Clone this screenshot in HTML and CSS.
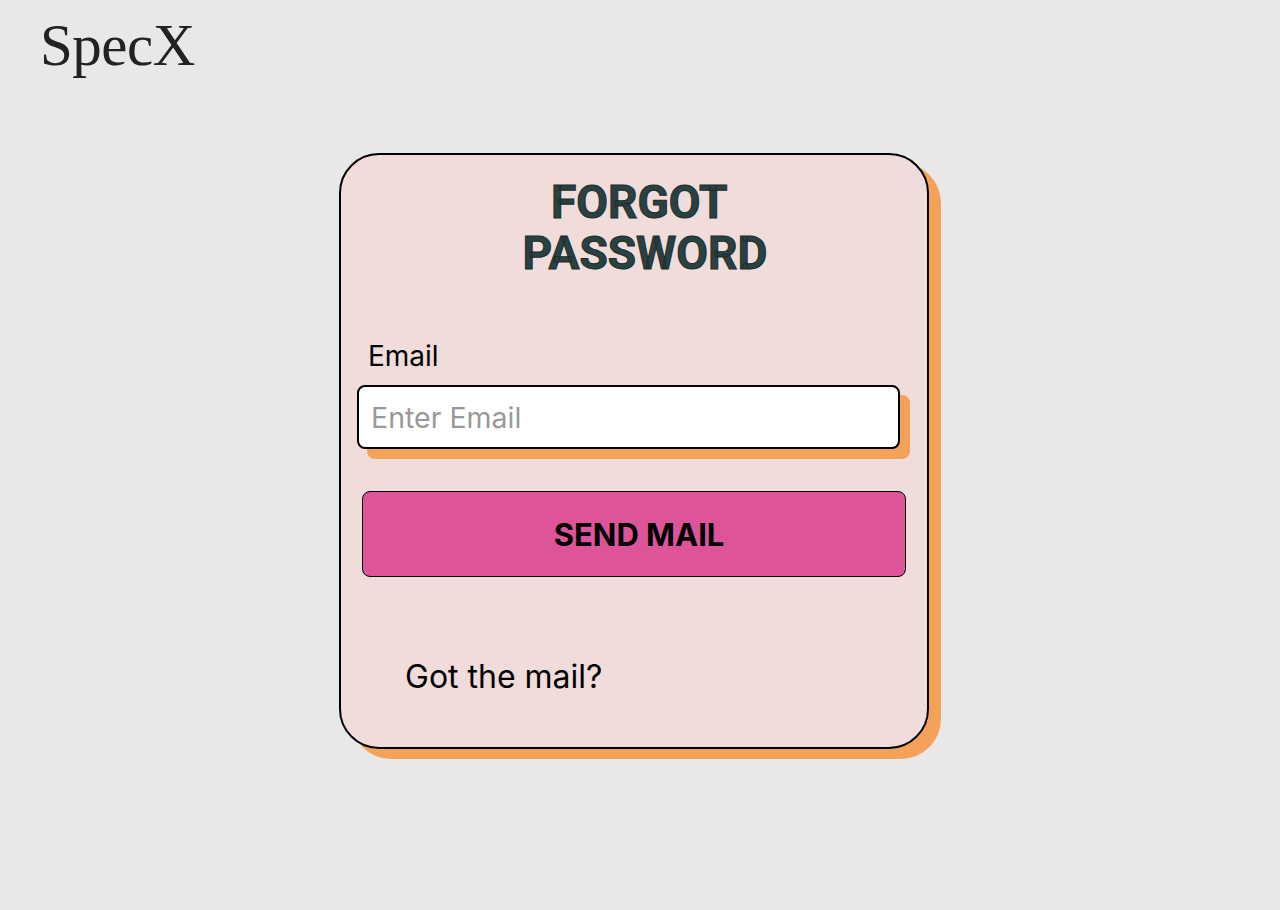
FILE: index.html
```html
<!DOCTYPE html>
<html lang="en">
<head>
<meta charset="utf-8">
<title>SpecX - Forgot Password</title>
<link rel="stylesheet" href="styles.css">
</head>
<body>
<header class="top">
  <div class="logo">SpecX</div>
</header>
<main class="stage">
  <section class="card">
    <h1 class="title">FORGOT&nbsp;<br>PASSWORD</h1>
    <label class="label" for="email">Email</label>
    <div class="field-wrap">
      <input class="field" id="email" type="email" placeholder="Enter Email">
    </div>
    <button class="send" type="button">SEND MAIL</button>
    <p class="got">Got the mail?</p>
  </section>
</main>
</body>
</html>
```
FILE: styles.css
```css
* { box-sizing: border-box; }
html {
  background: #e8e8e8;
}
body {
  margin: 0;
  padding: 0 0 60px 0;
  min-height: 100vh;
  font-family: Inter, "Noto Sans", sans-serif;
}
.top {
  height: 153px;
  padding: 10px 0 0 40px;
}
.logo {
  font-family: "Liberation Serif", "DejaVu Serif", serif;
  font-size: 59px;
  line-height: 70px;
  color: #222;
  letter-spacing: -0.5px;
}
.stage {
  display: flex;
  padding-left: 339px;
}
.card {
  width: 590px;
  height: 596px;
  background: #efdcdb;
  border: 2px solid #000;
  border-radius: 40px;
  box-shadow: 12px 10px 0 #f4a259;
  padding: 22px 16px 0 16px;
  display: flex;
  flex-direction: column;
}
.title {
  margin: 0;
  padding-left: 22px;
  text-align: center;
  font-family: Roboto, Inter, sans-serif;
  font-size: 46px;
  line-height: 51px;
  font-weight: 700;
  color: #2a4141;
  -webkit-text-stroke: 1px #1c2b2b;
}
.label {
  margin-top: 60px;
  padding-left: 11px;
  font-size: 28px;
  line-height: 34px;
  color: #000;
}
.field-wrap {
  margin-top: 12px;
}
.field {
  display: block;
  width: 543px;
  height: 64px;
  border: 2px solid #000;
  border-radius: 8px;
  background: #fff;
  box-shadow: 10px 10px 0 #f4a259;
  padding: 0 12px;
  font-family: Inter, "Noto Sans", sans-serif;
  font-size: 28.5px;
  color: #000;
  outline: none;
}
.field::placeholder { color: #999; }
.send {
  margin: 42px 0 0 5px;
  width: 544px;
  height: 86px;
  padding: 0 0 0 10px;
  background: #de5498;
  border: 1.5px solid #000;
  border-radius: 8px;
  font-family: Inter, "Noto Sans", sans-serif;
  font-size: 31px;
  font-weight: 700;
  color: #000;
  cursor: pointer;
}
.got {
  margin: 81px 0 0 0;
  padding-left: 48px;
  font-size: 32px;
  line-height: 38px;
  color: #000;
}
```
